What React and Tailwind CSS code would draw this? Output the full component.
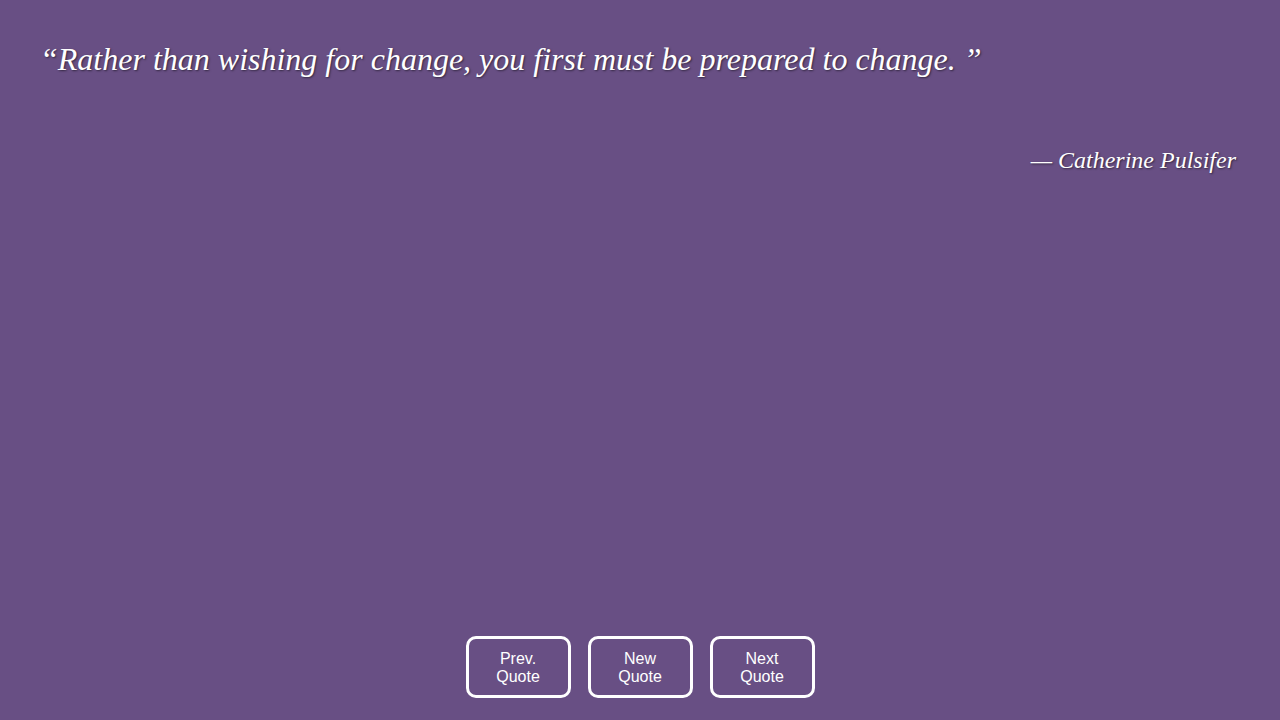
export default function App() {
  return (
    <div className="h-[720px] w-full bg-[#684f84] flex flex-col text-white overflow-hidden">
      <div className="pl-[40px] pr-[44px] pt-[37px]">
        <p className="font-['Liberation_Serif',serif] italic text-[32px] leading-[44px] [text-shadow:1px_1px_2px_rgba(0,0,0,0.5)]">
          “Rather than wishing for change, you first must be prepared to change. ”
        </p>
        <p className="mt-[63px] text-right font-['Liberation_Serif',serif] italic text-[24px] leading-[32px] [text-shadow:1px_1px_2px_rgba(0,0,0,0.5)]">
          — Catherine Pulsifer
        </p>
      </div>
      <div className="flex-1" />
      <div className="flex justify-center gap-[17px] pb-[22px]">
        {[["Prev.", "Quote"], ["New", "Quote"], ["Next", "Quote"]].map(([a, b]) => (
          <button
            key={a}
            className="w-[105px] h-[62px] pt-[1px] border-[3px] border-white rounded-[10px] font-['Liberation_Sans',sans-serif] text-[16px] leading-[18px] text-white flex flex-col items-center justify-center"
          >
            <span>{a}</span>
            <span>{b}</span>
          </button>
        ))}
      </div>
    </div>
  );
}
